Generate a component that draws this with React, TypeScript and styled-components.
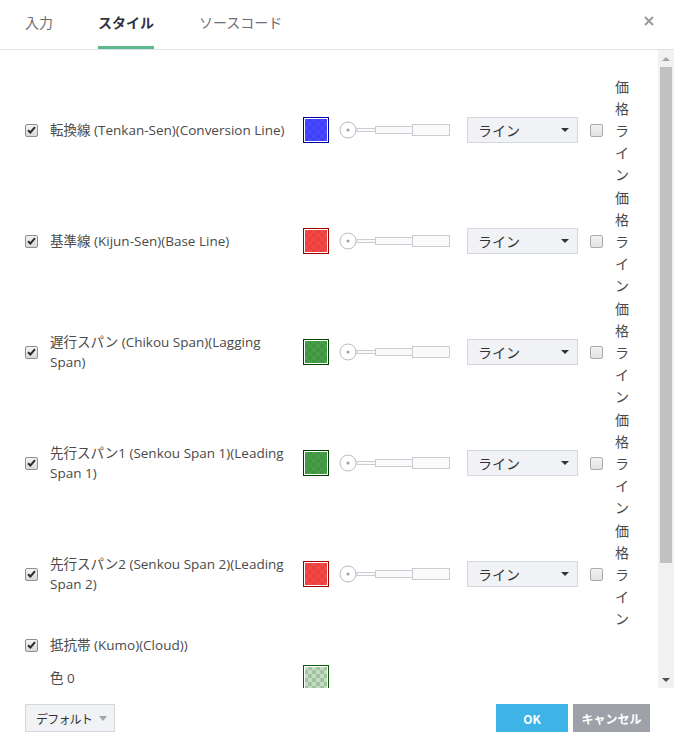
import styled, { createGlobalStyle } from 'styled-components';

const GlobalStyle = createGlobalStyle`
  html, body {
    margin: 0;
    padding: 0;
    background: #ffffff;
  }
  body {
    font-family: 'Open Sans', 'Noto Sans CJK JP', sans-serif;
    color: #4a4a4a;
  }
`;

type Line = {
  name: string;
  color: string;
  border: string;
};

const lines: Line[] = [
  { name: '転換線 (Tenkan-Sen)(Conversion Line)', color: 'rgba(40, 40, 255, 0.85)', border: '#0000a0' },
  { name: '基準線 (Kijun-Sen)(Base Line)', color: 'rgba(240, 40, 40, 0.85)', border: '#a00000' },
  { name: '遅行スパン (Chikou Span)(Lagging Span)', color: 'rgba(40, 140, 40, 0.85)', border: '#003d00' },
  { name: '先行スパン1 (Senkou Span 1)(Leading Span 1)', color: 'rgba(40, 140, 40, 0.85)', border: '#003d00' },
  { name: '先行スパン2 (Senkou Span 2)(Leading Span 2)', color: 'rgba(240, 40, 40, 0.85)', border: '#a00000' },
];

const Check = ({ checked }: { checked?: boolean }) => (
  <CheckBox $checked={checked}>
    {checked && (
      <svg width="9" height="8" viewBox="0 0 9 8">
        <path d="M1 4.2 L3.4 6.5 L8 1.2" fill="none" stroke="#2b2b2b" strokeWidth="2" />
      </svg>
    )}
  </CheckBox>
);

const ThicknessSlider = () => (
  <svg width="112" height="20" viewBox="0 0 112 20">
    <rect x="18" y="8.5" width="20" height="3" fill="#fafafa" stroke="#c9ccd2" />
    <rect x="36.5" y="6.5" width="37" height="7" fill="#fafafa" stroke="#c9ccd2" />
    <rect x="73.5" y="4.5" width="37" height="11" fill="#fafafa" stroke="#c9ccd2" />
    <circle cx="9" cy="10" r="8" fill="#ffffff" stroke="#b9bdc4" />
    <circle cx="9" cy="10" r="1.6" fill="#a0a4aa" />
  </svg>
);

const App = () => {
  return (
    <>
      <GlobalStyle />
      <Dialog>
        <Header>
          <Tabs>
            <Tab>入力</Tab>
            <Tab $active>スタイル</Tab>
            <Tab>ソースコード</Tab>
          </Tabs>
          <Close>
            <svg width="10" height="10" viewBox="0 0 10 10">
              <path d="M1 1 L9 9 M9 1 L1 9" stroke="#9a9a9a" strokeWidth="2" />
            </svg>
          </Close>
        </Header>

        <Body>
          <Content>
            {lines.map((line) => (
              <Row key={line.name}>
                <Check checked />
                <Label>{line.name}</Label>
                <Swatch $color={line.color} $border={line.border} />
                <ThicknessSlider />
                <Select>
                  <span>ライン</span>
                  <Caret />
                </Select>
                <Check />
                <Vertical>価格ライン</Vertical>
              </Row>
            ))}
            <KumoRow>
              <Check checked />
              <Label>抵抗帯 (Kumo)(Cloud))</Label>
            </KumoRow>
            <ColorRow>
              <span />
              <Label>色 0</Label>
              <Swatch $color="rgba(120, 180, 120, 0.45)" $border="#0a5a0a" />
            </ColorRow>
          </Content>

          <Scrollbar>
            <ScrollArrow $up />
            <Track>
              <Thumb />
            </Track>
            <ScrollArrow />
          </Scrollbar>
        </Body>

        <Footer>
          <DefaultButton>
            デフォルト
            <SmallCaret />
          </DefaultButton>
          <Actions>
            <OkButton>OK</OkButton>
            <CancelButton>キャンセル</CancelButton>
          </Actions>
        </Footer>
      </Dialog>
    </>
  );
};

export default App;

const Dialog = styled.div`
  width: 674px;
  height: 756px;
  display: flex;
  flex-direction: column;
  background: #ffffff;
  overflow: hidden;
`;

const Header = styled.header`
  height: 49px;
  border-bottom: 1px solid #e0e3e8;
  display: flex;
  justify-content: space-between;
  align-items: flex-start;
  padding: 0 19px 0 25px;
`;

const Tabs = styled.nav`
  display: flex;
  gap: 45px;
  height: 49px;
`;

const Tab = styled.div<{ $active?: boolean }>`
  box-sizing: border-box;
  height: 49px;
  padding-top: 11px;
  font-family: 'Noto Sans CJK JP', sans-serif;
  font-size: 14px;
  line-height: 22px;
  font-weight: ${({ $active }) => ($active ? 700 : 400)};
  color: ${({ $active }) => ($active ? '#2f3540' : '#6a6e75')};
  border-bottom: 3px solid ${({ $active }) => ($active ? '#5cb98c' : 'transparent')};
`;

const Close = styled.div`
  margin-top: 15px;
  width: 12px;
  height: 12px;
  display: flex;
  align-items: center;
  justify-content: center;
`;

const Body = styled.div`
  height: 638px;
  display: flex;
`;

const Content = styled.div`
  flex: 1;
  overflow: hidden;
  box-sizing: border-box;
  padding: 25px 0 0 25px;
`;

const Row = styled.div`
  display: grid;
  grid-template-columns: 25px 253px 36px 128px 123px 25px 16px;
  align-items: center;
  margin-bottom: 1px;
`;

const KumoRow = styled(Row)`
  margin-top: 4px;
  height: 24px;
`;

const ColorRow = styled(Row)`
  margin-top: 8px;
  height: 26px;
`;

const CheckBox = styled.span<{ $checked?: boolean }>`
  box-sizing: border-box;
  width: 13px;
  height: 13px;
  border: 1px solid ${({ $checked }) => ($checked ? '#8e8e8e' : '#a9abae')};
  border-radius: 2px;
  background: ${({ $checked }) =>
    $checked ? 'linear-gradient(#f4f4f4, #d9d9d9)' : 'linear-gradient(#f2f2f2, #e2e2e2)'};
  display: flex;
  align-items: center;
  justify-content: center;
`;

const Label = styled.span`
  padding-right: 12px;
  font-size: 13.5px;
  line-height: 20px;
  color: #4a4a4a;
`;

const Swatch = styled.span<{ $color: string; $border: string }>`
  box-sizing: border-box;
  width: 26px;
  height: 26px;
  border: 1px solid ${({ $border }) => $border};
  box-shadow: inset 0 0 0 1px #ffffff;
  background:
    linear-gradient(${({ $color }) => $color}, ${({ $color }) => $color}),
    repeating-conic-gradient(#c8c8c8 0% 25%, #ffffff 0% 50%) 0 0 / 8px 8px;
  background-clip: content-box;
  padding: 1px;
`;

const Select = styled.div`
  box-sizing: border-box;
  width: 111px;
  height: 26px;
  border: 1px solid #d4d7dd;
  background: #f0f2f5;
  display: flex;
  align-items: center;
  justify-content: space-between;
  padding: 0 8px 0 10px;
  font-family: 'Noto Sans CJK JP', sans-serif;
  font-size: 14px;
  color: #333333;
`;

const Caret = styled.span`
  width: 0;
  height: 0;
  border-left: 4px solid transparent;
  border-right: 4px solid transparent;
  border-top: 4px solid #333333;
`;

const Vertical = styled.div`
  width: 16px;
  font-family: 'Noto Sans CJK JP', sans-serif;
  font-size: 14px;
  line-height: 22px;
  color: #4a4a4a;
  word-break: break-all;
`;

const Scrollbar = styled.div`
  width: 16px;
  background: #f1f1f1;
  display: flex;
  flex-direction: column;
  align-items: center;
`;

const ScrollArrow = styled.span<{ $up?: boolean }>`
  flex: 0 0 17px;
  width: 16px;
  display: flex;
  align-items: center;
  justify-content: center;

  &::before {
    content: '';
    width: 0;
    height: 0;
    border-left: 4px solid transparent;
    border-right: 4px solid transparent;
    ${({ $up }) =>
      $up ? 'border-bottom: 4px solid #a3a3a3;' : 'border-top: 4px solid #505050;'}
  }
`;

const Track = styled.div`
  flex: 1;
  width: 12px;
`;

const Thumb = styled.div`
  width: 12px;
  height: 496px;
  background: #c1c1c1;
`;

const Footer = styled.footer`
  flex: 1;
  display: flex;
  justify-content: space-between;
  align-items: flex-start;
  padding: 16px 24px 0 25px;
`;

const DefaultButton = styled.div`
  box-sizing: border-box;
  width: 90px;
  height: 28px;
  border: 1px solid #d4d6db;
  background: #f0f2f5;
  display: flex;
  align-items: center;
  gap: 7px;
  padding-left: 10px;
  font-family: 'Noto Sans CJK JP', sans-serif;
  font-size: 12px;
  letter-spacing: -0.8px;
  color: #333333;
`;

const SmallCaret = styled.span`
  width: 0;
  height: 0;
  border-left: 4px solid transparent;
  border-right: 4px solid transparent;
  border-top: 5px solid #a2a5ab;
`;

const Actions = styled.div`
  display: flex;
  gap: 5px;
`;

const ActionButton = styled.div`
  height: 28px;
  display: flex;
  align-items: center;
  justify-content: center;
  font-family: 'Noto Sans CJK JP', sans-serif;
  font-size: 12px;
  font-weight: 700;
  color: #ffffff;
`;

const OkButton = styled(ActionButton)`
  width: 72px;
  background: #3db4e5;
`;

const CancelButton = styled(ActionButton)`
  width: 77px;
  background: #9ea1a8;
`;
